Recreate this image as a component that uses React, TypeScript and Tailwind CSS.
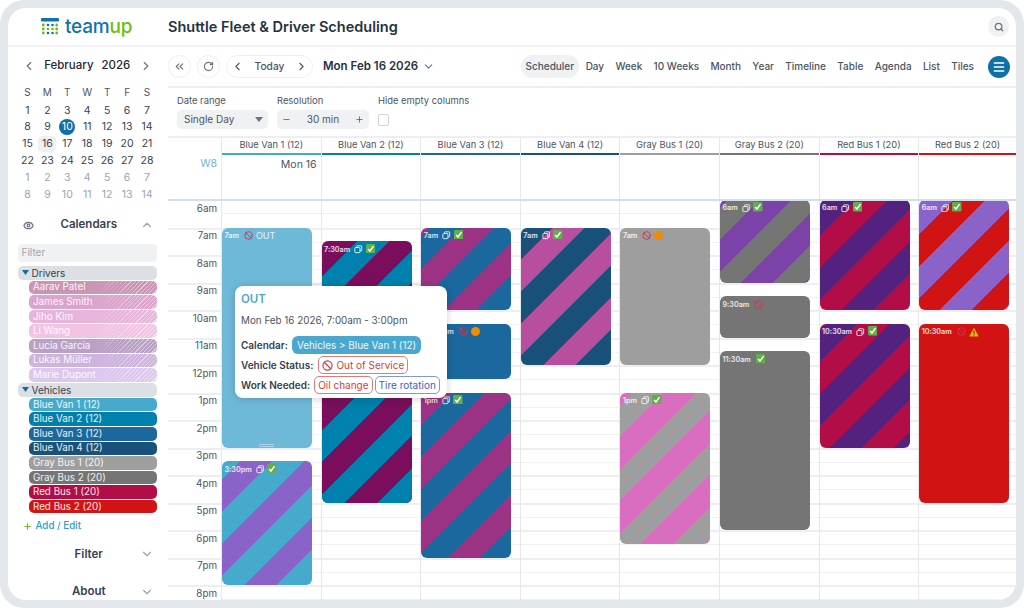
import { Ban, ChevronDown, ChevronLeft, ChevronRight, ChevronUp, ChevronsLeft, Eye, Menu, Minus, Plus, RotateCw, Search } from "lucide-react";

const HOUR = 27.5;
const hours = ["6am", "7am", "8am", "9am", "10am", "11am", "12pm", "1pm", "2pm", "3pm", "4pm", "5pm", "6pm", "7pm", "8pm"];
const views = ["Day", "Week", "10 Weeks", "Month", "Year", "Timeline", "Table", "Agenda", "List", "Tiles"];

const weeks = [
  [1, 2, 3, 4, 5, 6, 7],
  [8, 9, 10, 11, 12, 13, 14],
  [15, 16, 17, 18, 19, 20, 21],
  [22, 23, 24, 25, 26, 27, 28],
  [1, 2, 3, 4, 5, 6, 7],
  [8, 9, 10, 11, 12, 13, 14],
];

const drivers = [
  { name: "Aarav Patel", bg: "bg-[#cc94b5]" },
  { name: "James Smith", bg: "bg-[#dca3cc]" },
  { name: "Jiho Kim", bg: "bg-[#e7b4dc]" },
  { name: "Li Wang", bg: "bg-[#f2c3e3]" },
  { name: "Lucia Garcia", bg: "bg-[#bba0c6]" },
  { name: "Lukas Müller", bg: "bg-[#cdb3dd]" },
  { name: "Marie Dupont", bg: "bg-[#dcc8ee]" },
];

const vehicles = [
  { name: "Blue Van 1 (12)", bg: "bg-[#46a9ce]" },
  { name: "Blue Van 2 (12)", bg: "bg-[#0080ac]" },
  { name: "Blue Van 3 (12)", bg: "bg-[#1a689e]" },
  { name: "Blue Van 4 (12)", bg: "bg-[#18527a]" },
  { name: "Gray Bus 1 (20)", bg: "bg-[#9e9e9e]" },
  { name: "Gray Bus 2 (20)", bg: "bg-[#757575]" },
  { name: "Red Bus 1 (20)", bg: "bg-[#b20d47]" },
  { name: "Red Bus 2 (20)", bg: "bg-[#d11313]" },
];

type Ev = {
  from: number;
  to: number;
  time: string;
  bg: string;
  icons: ("copy" | "check" | "ban" | "dot" | "warn")[];
  label?: string;
  lower?: string; // stripes below the popover are out of step with the ones above it
};

const columns: { bar: string; events: Ev[] }[] = [
  {
    bar: "bg-[#46a9ce]",
    events: [
      { from: 7, to: 15, time: "7am", bg: "bg-[#6fb9d8]", icons: ["ban"], label: "OUT" },
      { from: 15.5, to: 20, time: "3:30pm", bg: "bg-[repeating-linear-gradient(135deg,#46a9ce_0_13.4px,#8a63c8_13.4px_36px,#46a9ce_36px_45.25px)]", icons: ["copy", "check"] },
    ],
  },
  {
    bar: "bg-[#0080ac]",
    events: [
      {
        from: 7.5,
        to: 17,
        time: "7:30am",
        bg: "bg-[repeating-linear-gradient(135deg,#0080ac_0_2.8px,#7a0e5c_2.8px_25.4px,#0080ac_25.4px_45.25px)]",
        lower: "bg-[repeating-linear-gradient(135deg,#7a0e5c_0_17.7px,#0080ac_17.7px_40.3px,#7a0e5c_40.3px_45.25px)]",
        icons: ["copy", "check"],
      },
    ],
  },
  {
    bar: "bg-[#1a689e]",
    events: [
      { from: 7, to: 10, time: "7am", bg: "bg-[repeating-linear-gradient(135deg,#9c3384_0_7px,#1a689e_7px_29.6px,#9c3384_29.6px_45.25px)]", icons: ["copy", "check"] },
      { from: 10.5, to: 12.5, time: "10:30am", bg: "bg-[#1a689e]", icons: ["ban", "dot"] },
      { from: 13, to: 19, time: "1pm", bg: "bg-[repeating-linear-gradient(135deg,#9c3384_0_22.63px,#1a689e_22.63px_45.25px)]", icons: ["copy", "check"] },
    ],
  },
  {
    bar: "bg-[#18527a]",
    events: [
      { from: 7, to: 12, time: "7am", bg: "bg-[repeating-linear-gradient(135deg,#18527a_0_22px,#b84f9e_22px_44.6px,#18527a_44.6px_45.25px)]", icons: ["copy", "check"] },
    ],
  },
  {
    bar: "bg-[#9e9e9e]",
    events: [
      { from: 7, to: 12, time: "7am", bg: "bg-[#9e9e9e]", icons: ["ban", "dot"] },
      { from: 13, to: 18.5, time: "1pm", bg: "bg-[repeating-linear-gradient(135deg,#d96dbf_0_8.5px,#9e9e9e_8.5px_31.1px,#d96dbf_31.1px_45.25px)]", icons: ["copy", "check"] },
    ],
  },
  {
    bar: "bg-[#757575]",
    events: [
      { from: 6, to: 9, time: "6am", bg: "bg-[repeating-linear-gradient(135deg,#7b42a8_0_5px,#757575_5px_27.6px,#7b42a8_27.6px_45.25px)]", icons: ["copy", "check"] },
      { from: 9.5, to: 11, time: "9:30am", bg: "bg-[#757575]", icons: ["ban"] },
      { from: 11.5, to: 18, time: "11:30am", bg: "bg-[#757575]", icons: ["check"] },
    ],
  },
  {
    bar: "bg-[#b20d47]",
    events: [
      { from: 6, to: 10, time: "6am", bg: "bg-[repeating-linear-gradient(135deg,#b20d47_0_2.8px,#53227f_2.8px_25.4px,#b20d47_25.4px_45.25px)]", icons: ["copy", "check"] },
      { from: 10.5, to: 15, time: "10:30am", bg: "bg-[repeating-linear-gradient(135deg,#b20d47_0_4.2px,#53227f_4.2px_26.8px,#b20d47_26.8px_45.25px)]", icons: ["copy", "check"] },
    ],
  },
  {
    bar: "bg-[#d11313]",
    events: [
      { from: 6, to: 10, time: "6am", bg: "bg-[repeating-linear-gradient(135deg,#d11313_0_2.1px,#8a63c8_2.1px_24.7px,#d11313_24.7px_45.25px)]", icons: ["copy", "check"] },
      { from: 10.5, to: 17, time: "10:30am", bg: "bg-[#d11313]", icons: ["ban", "warn"] },
    ],
  },
];

const colNames = ["Blue Van 1 (12)", "Blue Van 2 (12)", "Blue Van 3 (12)", "Blue Van 4 (12)", "Gray Bus 1 (20)", "Gray Bus 2 (20)", "Red Bus 1 (20)", "Red Bus 2 (20)"];

function EventIcon({ kind }: { kind: Ev["icons"][number] }) {
  if (kind === "copy") {
    return (
      <svg width="8.5" height="8.5" viewBox="0 0 10 10" fill="none" stroke="white" strokeWidth="1.1" className="shrink-0 opacity-90">
        <rect x="1" y="3" width="6" height="6" rx="0.8" />
        <path d="M3 3V1.6C3 1.2 3.2 1 3.6 1H8.4C8.8 1 9 1.2 9 1.6V6.4C9 6.8 8.8 7 8.4 7H7" />
      </svg>
    );
  }
  if (kind === "check") {
    return (
      <svg width="9.5" height="9.5" viewBox="0 0 10 10" className="mb-[2px] ml-[1px] shrink-0">
        <rect width="10" height="10" rx="1" fill="#63ad4c" />
        <path d="M2.2 5.2L4.2 7.4L7.9 2.2" fill="none" stroke="white" strokeWidth="1.5" />
      </svg>
    );
  }
  if (kind === "ban") return <Ban size={9} strokeWidth={2.6} className="mx-[1px] shrink-0 text-[#d9334f]" />;
  if (kind === "dot") return <span className="h-[9px] w-[9px] shrink-0 rounded-full bg-[#f08c00]" />;
  return (
    <svg width="10" height="10" viewBox="0 0 10 10" className="shrink-0">
      <path d="M5 .8L9.8 9.4H.2Z" fill="#e3b505" />
      <path d="M5 3.6V6.6M5 7.4V8.4" stroke="#3a3205" strokeWidth="1" />
    </svg>
  );
}

function EventCard({ ev }: { ev: Ev }) {
  return (
    <div
      className={`absolute left-0 w-[90px] overflow-hidden rounded-[6px] ${ev.bg}`}
      style={{ top: (ev.from - 6) * HOUR - 1, height: (ev.to - ev.from) * HOUR }}
    >
      {ev.lower && <div className={`absolute inset-x-0 bottom-0 top-[100px] ${ev.lower}`} />}
      <div className="relative flex h-[13px] items-center gap-[2px] pl-[2.5px] pt-[3px] text-[7.2px] font-semibold leading-none text-white/85">
        <span className="mr-[2px]">{ev.time}</span>
        {ev.icons.map((k, i) => (
          <EventIcon key={i} kind={k} />
        ))}
        {ev.label && <span className="text-[9px] font-normal">{ev.label}</span>}
      </div>
      {ev.label && <div className="absolute bottom-[1px] left-[37px] h-[3px] w-[15px] border-y border-white/40" />}
    </div>
  );
}

function CalItem({ name, bg, hatch }: { name: string; bg: string; hatch?: boolean }) {
  return (
    <div className={`relative flex h-[13.6px] items-center overflow-hidden rounded-[5px] pl-[4px] text-[9.8px] leading-none text-white/90 ${bg}`}>
      {hatch && (
        <span className="absolute inset-0 bg-[repeating-linear-gradient(135deg,rgba(255,255,255,0.45)_0_1px,transparent_1px_3px)] [mask-image:linear-gradient(to_right,transparent_50%,black_85%)]" />
      )}
      <span className="relative">{name}</span>
    </div>
  );
}

function GroupRow({ name }: { name: string }) {
  return (
    <div className="flex h-[14px] items-center gap-[3px] rounded-[5px] bg-[#dcdfe3] pl-[4px] text-[10px] leading-none text-[#374151]">
      <svg width="7" height="5" viewBox="0 0 7 5" className="shrink-0">
        <path d="M0 0H7L3.5 5Z" fill="#0f6fa8" />
      </svg>
      {name}
    </div>
  );
}

function SideHeading({ title, open, className }: { title: string; open?: boolean; className: string }) {
  return (
    <div className={`relative flex h-[20px] items-center justify-center pl-[3px] text-[11.5px] font-semibold text-[#374151] ${className}`}>
      {title}
      {open ? (
        <ChevronUp size={14} className="absolute right-[3px] text-[#9ca3af]" />
      ) : (
        <ChevronDown size={14} className="absolute right-[3px] text-[#9ca3af]" />
      )}
    </div>
  );
}

export default function App() {
  return (
    <div className="h-[608px] w-[1024px] overflow-hidden bg-white font-['Inter',sans-serif]">
      <div className="h-full w-full rounded-[24px] bg-[#e3e6ea] p-2">
        <div className="relative flex h-[592px] flex-col overflow-hidden rounded-[18px] bg-white">
          {/* Top bar */}
          <div className="flex h-[39px] shrink-0 items-center border-b-2 border-[#f1f2f4] pr-[7px]">
            <div className="flex w-[160px] shrink-0 items-center pl-[33px]">
              <svg width="18" height="18" viewBox="0 0 18 18" className="mr-[6px] shrink-0">
                <rect x="0" y="0" width="18" height="3.4" rx="1" fill="#1272ab" />
                <circle cx="2.3" cy="7" r="1.4" fill="#6cbd0e" />
                <circle cx="7" cy="7" r="1.3" fill="#1272ab" />
                <circle cx="11.5" cy="7" r="1.3" fill="#1272ab" />
                <circle cx="15.7" cy="7" r="1.4" fill="#6cbd0e" />
                <circle cx="2.3" cy="11" r="1.4" fill="#6cbd0e" />
                <circle cx="7" cy="11" r="1.3" fill="#6cbd0e" />
                <circle cx="11.5" cy="11" r="1.3" fill="#6cbd0e" />
                <circle cx="15.7" cy="11" r="1.4" fill="#6cbd0e" />
                <circle cx="2.3" cy="15" r="1.4" fill="#6cbd0e" />
                <circle cx="7" cy="15" r="1.3" fill="#1272ab" />
                <circle cx="11.5" cy="15" r="1.3" fill="#1272ab" />
                <circle cx="15.7" cy="15" r="1.4" fill="#6cbd0e" />
              </svg>
              <span className="text-[19px] font-medium leading-none tracking-[-0.2px]">
                <span className="text-[#1272ab]">team</span>
                <span className="text-[#6cbd0e]">up</span>
              </span>
            </div>
            <h1 className="text-[14.5px] font-semibold text-[#25333f]">Shuttle Fleet &amp; Driver Scheduling</h1>
            <div className="ml-auto flex h-[21px] w-[21px] items-center justify-center rounded-full bg-[#f0f1f3]">
              <Search size={10} strokeWidth={3} className="text-[#6b7280]" />
            </div>
          </div>

          <div className="flex min-h-0 flex-1">
            {/* Sidebar */}
            <aside className="flex w-[160px] shrink-0 flex-col pl-[9.5px] pr-[11px]">
              <div className="mt-[1px] flex h-[36px] shrink-0 items-center justify-between px-[4px] text-[#6b7280]">
                <ChevronLeft size={14} />
                <span className="flex gap-[8px] text-[11.5px] font-medium text-[#1f2937]">
                  <span>February</span>
                  <span>2026</span>
                </span>
                <ChevronRight size={14} />
              </div>
              <div className="grid h-[18px] shrink-0 grid-cols-7 items-center pb-[2px] text-center text-[10px] text-[#4b5563]">
                {["S", "M", "T", "W", "T", "F", "S"].map((d, i) => (
                  <span key={i}>{d}</span>
                ))}
              </div>
              {weeks.map((w, wi) => (
                <div key={wi} className={`grid h-[16.85px] shrink-0 grid-cols-7 items-center text-center text-[10.5px] ${wi > 3 ? "text-[#9ca3af]" : "text-[#374151]"}`}>
                  {w.map((d) => {
                    if (wi === 1 && d === 10) {
                      return (
                        <span key={d} className="mx-auto flex h-[16px] w-[16px] items-center justify-center rounded-full bg-[#0f6fa8] text-white">
                          {d}
                        </span>
                      );
                    }
                    if (wi === 2 && d === 16) {
                      return (
                        <span key={d} className="mx-[1px] flex h-[15.5px] items-center justify-center rounded-[4px] bg-[#eef0f2]">
                          {d}
                        </span>
                      );
                    }
                    return <span key={d}>{d}</span>;
                  })}
                </div>
              ))}

              <div className="relative mt-[11.5px] shrink-0">
                <Eye size={11} strokeWidth={2.6} className="absolute left-[5px] top-[5px] text-[#6b7280]" />
                <SideHeading title="Calendars" open className="" />
              </div>
              <div className="mt-[9px] flex h-[18px] shrink-0 items-center rounded-[4px] bg-[#f0f1f3] pl-[4px] text-[10px] text-[#9ca3af]">Filter</div>
              <div className="mt-[4px] flex shrink-0 flex-col gap-[1px]">
                <GroupRow name="Drivers" />
                <div className="flex flex-col gap-[1px] pl-[11.5px]">
                  {drivers.map((d) => (
                    <CalItem key={d.name} name={d.name} bg={d.bg} hatch />
                  ))}
                </div>
                <GroupRow name="Vehicles" />
                <div className="flex flex-col gap-[1px] pl-[11.5px]">
                  {vehicles.map((v) => (
                    <CalItem key={v.name} name={v.name} bg={v.bg} />
                  ))}
                </div>
              </div>
              <div className="mt-[6px] flex h-[14px] shrink-0 items-center gap-[4px] pl-[5px] text-[9.8px] font-medium text-[#2e9bd0]">
                <Plus size={9} strokeWidth={3} className="text-[#6cbd0e]" />
                Add / Edit
              </div>
              <SideHeading title="Filter" className="mt-[11px] shrink-0" />
              <SideHeading title="About" className="mt-[17.5px] shrink-0" />
            </aside>

            {/* Main */}
            <main className="flex min-w-0 flex-1 flex-col">
              <div className="flex h-[41px] shrink-0 items-center border-b-2 border-[#eceef1] pr-[6px] text-[#6b7280]">
                <span className="flex h-[23px] w-[23px] items-center justify-center rounded-full border border-[#eceef1]">
                  <ChevronsLeft size={13} />
                </span>
                <span className="ml-[6px] flex h-[23px] w-[23px] items-center justify-center rounded-full border border-[#eceef1]">
                  <RotateCw size={11} strokeWidth={2.4} />
                </span>
                <span className="ml-[6px] flex h-[23px] w-[87px] items-center justify-between rounded-full border border-[#eceef1] px-[4px] text-[10.2px] font-medium text-[#4b5563]">
                  <ChevronLeft size={13} />
                  Today
                  <ChevronRight size={13} />
                </span>
                <span className="ml-[10px] text-[11.5px] font-semibold text-[#25333f]">Mon Feb 16 2026</span>
                <ChevronDown size={13} className="ml-[4px]" />
                <span className="ml-auto flex h-[23px] items-center rounded-full bg-[#f0f1f3] px-[4.5px] text-[10px] font-medium text-[#4b5563]">Scheduler</span>
                <div className="ml-[7px] flex gap-[11.3px] text-[10px] font-medium text-[#4b5563]">
                  {views.map((v) => (
                    <span key={v}>{v}</span>
                  ))}
                </div>
                <span className="ml-[14px] flex h-[22px] w-[22px] items-center justify-center rounded-full bg-[#0f6fa8] text-white">
                  <Menu size={14} strokeWidth={2.5} />
                </span>
              </div>

              <div className="flex h-[50px] shrink-0 items-start gap-[9px] border-b-2 border-[#eceef1] pl-[9px] pt-[7px] text-[9.4px] text-[#4b5563]">
                <div className="w-[91px]">
                  <div className="h-[15px] leading-[12px]">Date range</div>
                  <div className="flex h-[19px] items-center justify-between rounded-[5px] bg-[#f0f1f3] pl-[7px] pr-[5px] text-[10px]">
                    Single Day
                    <svg width="8" height="5" viewBox="0 0 8 5">
                      <path d="M0 0H8L4 5Z" fill="#6b7280" />
                    </svg>
                  </div>
                </div>
                <div className="w-[92px]">
                  <div className="h-[15px] leading-[12px]">Resolution</div>
                  <div className="flex h-[19px] items-center justify-between rounded-[5px] bg-[#f0f1f3] px-[5px] text-[10px]">
                    <Minus size={9} />
                    30 min
                    <Plus size={9} />
                  </div>
                </div>
                <div>
                  <div className="h-[19px] leading-[12px]">Hide empty columns</div>
                  <div className="h-[12px] w-[11px] rounded-[2px] border border-[#d1d5db]" />
                </div>
              </div>

              {/* Column headers and all-day row */}
              <div className="flex h-[61px] shrink-0">
                <div className="w-[53px] shrink-0 pr-[4px] pt-[18px] text-right text-[10.5px] text-[#6db6dc]">W8</div>
                <div className="grid flex-1 grid-cols-[repeat(7,99.6px)_1fr]">
                  {columns.map((c, i) => (
                    <div key={i} className="flex flex-col border-l border-[#e6e8ec]">
                      <div className="flex h-[14.5px] items-center justify-center text-[9.3px] text-[#4b5563]">{colNames[i]}</div>
                      <div className={`h-[2.5px] ${c.bar}`} />
                      {i === 0 && <div className="pr-[4px] pt-[2px] text-right text-[10.5px] text-[#4b5563]">Mon 16</div>}
                    </div>
                  ))}
                </div>
              </div>

              {/* Time grid */}
              <div className="flex min-h-0 flex-1 overflow-hidden border-t-2 border-[#d3def5]">
                <div className="w-[53px] shrink-0">
                  {hours.map((h, i) => (
                    <div key={h} className={`pr-[4px] text-right text-[9.8px] leading-[10px] text-[#4b5563] ${i === 0 ? "h-[26.5px] pt-[2.5px]" : "h-[27.5px] border-t-2 border-[#eceef1] pt-[1.5px]"}`}>
                      {h}
                    </div>
                  ))}
                </div>
                <div className="grid flex-1 grid-cols-[repeat(7,99.6px)_1fr]">
                  {columns.map((c, i) => (
                    <div key={i} className="relative border-l border-[#e6e8ec]">
                      {hours.map((h, j) => (
                        <div key={h} className={j === 0 ? "h-[26.5px]" : "h-[27.5px] border-t-2 border-[#eceef1]"}>
                          <div className="h-[13px] border-b border-dotted border-[#e6e8ec]" />
                        </div>
                      ))}
                      {c.events.map((ev) => (
                        <EventCard key={ev.time} ev={ev} />
                      ))}
                    </div>
                  ))}
                </div>
              </div>
            </main>
          </div>

          {/* Event popover */}
          <div className="absolute left-[227px] top-[278px] h-[112px] w-[212px] rounded-[8px] bg-white px-[6px] pt-[5px] shadow-[0_1px_8px_rgba(0,0,0,0.18)]">
            <div className="text-[11.5px] font-semibold leading-[16px] text-[#4aa8cf]">OUT</div>
            <div className="mt-[7px] text-[9.85px] leading-[13px] text-[#4b5563]">Mon Feb 16 2026, 7:00am - 3:00pm</div>
            <div className="mt-[9px] flex h-[18px] items-center gap-[4px] whitespace-nowrap text-[10px]">
              <span className="shrink-0 font-semibold text-[#374151]">Calendar:</span>
              <span className="flex h-[18px] shrink-0 items-center rounded-[6px] bg-[#4aa8cf] px-[5px] text-[9.9px] text-white/90">Vehicles &gt; Blue Van 1 (12)</span>
            </div>
            <div className="mt-[2px] flex h-[18px] items-center gap-[5px] whitespace-nowrap text-[10px]">
              <span className="shrink-0 font-semibold text-[#374151]">Vehicle Status:</span>
              <span className="flex h-[18px] shrink-0 items-center gap-[3px] rounded-[5px] border border-[#e27a7a] px-[3px] text-[#d63b3b]">
                <Ban size={11} strokeWidth={2.6} />
                Out of Service
              </span>
            </div>
            <div className="mt-[2px] flex h-[18px] items-center gap-[2px] whitespace-nowrap text-[10px]">
              <span className="mr-[2px] shrink-0 font-semibold text-[#374151]">Work Needed:</span>
              <span className="flex h-[18px] shrink-0 items-center rounded-[5px] border border-[#e27a7a] px-[3px] text-[#d63b3b]">Oil change</span>
              <span className="flex h-[18px] shrink-0 items-center rounded-[5px] border border-[#7f97dc] px-[3px] text-[#4161c5]">Tire rotation</span>
            </div>
          </div>
        </div>
      </div>
    </div>
  );
}
